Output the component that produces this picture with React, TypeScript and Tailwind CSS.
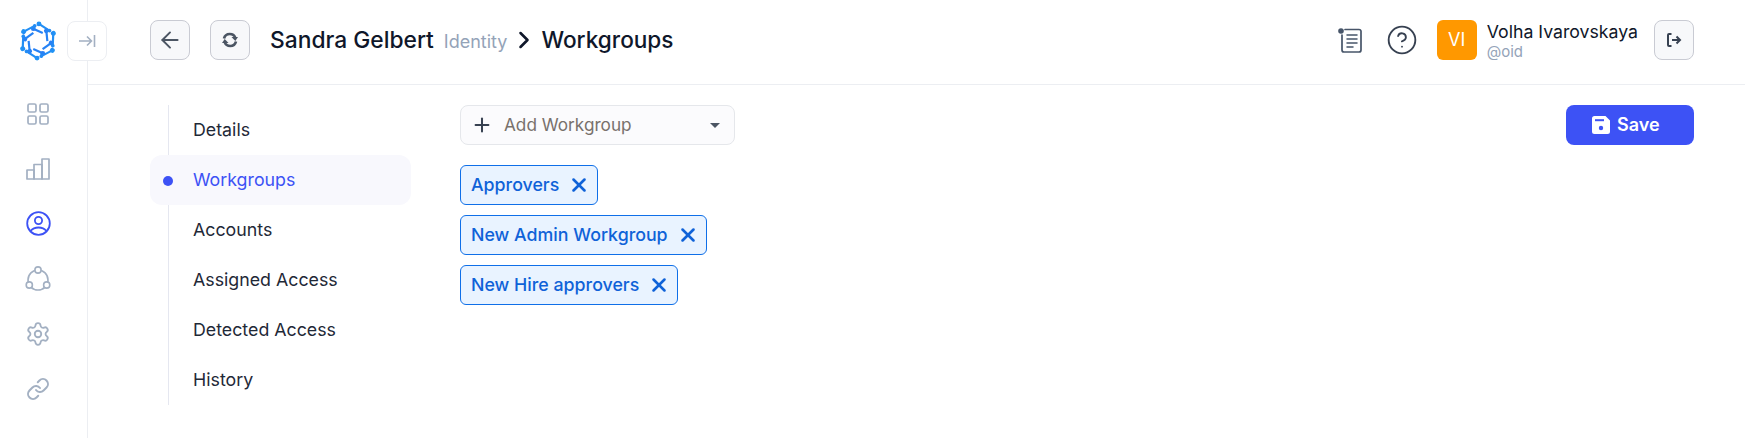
import { ArrowLeft, ChevronRight, CircleHelp, Link as LinkIcon, Plus, Settings, X } from 'lucide-react';

const NAV_ITEMS = ['Details', 'Workgroups', 'Accounts', 'Assigned Access', 'Detected Access', 'History'];
const CHIPS = ['Approvers', 'New Admin Workgroup', 'New Hire approvers'];

function Logo() {
  const arm = (
    <g>
      <path d="M21 2 L32 9" fill="none" stroke="url(#logoFill)" strokeWidth="2.3" />
      <circle cx="21" cy="2" r="2.6" fill="url(#logoFill)" />
      <circle cx="32" cy="9" r="2" fill="url(#logoFill)" />
      <path d="M15 7 L25 11.5" fill="none" stroke="url(#logoFill)" strokeWidth="2.3" />
      <circle cx="15" cy="7" r="2.5" fill="url(#logoFill)" />
    </g>
  );
  return (
    <svg width="38" height="40" viewBox="0 0 40 42" aria-hidden>
      <defs>
        <linearGradient id="logoFill" gradientUnits="userSpaceOnUse" x1="30" y1="0" x2="12" y2="42">
          <stop offset="0" stopColor="#1e9bf5" />
          <stop offset="1" stopColor="#3b3ff2" />
        </linearGradient>
      </defs>
      <g transform="translate(0 1)">
        {arm}
        <g transform="rotate(60 20 20)">{arm}</g>
        <g transform="rotate(120 20 20)">{arm}</g>
        <g transform="rotate(180 20 20)">{arm}</g>
        <g transform="rotate(240 20 20)">{arm}</g>
        <g transform="rotate(300 20 20)">{arm}</g>
      </g>
    </svg>
  );
}

function GridIcon() {
  return (
    <svg width="22" height="22" viewBox="0 0 22 22" fill="none" stroke="currentColor" strokeWidth="1.7" aria-hidden>
      <rect x="1" y="1" width="8" height="8" rx="1.5" />
      <rect x="13" y="1" width="8" height="8" rx="1.5" />
      <rect x="1" y="13" width="8" height="8" rx="1.5" />
      <rect x="13" y="13" width="8" height="8" rx="1.5" />
    </svg>
  );
}

function BarsIcon() {
  return (
    <svg width="24" height="22" viewBox="0 0 24 22" fill="none" stroke="currentColor" strokeWidth="1.7" strokeLinejoin="round" aria-hidden>
      <path d="M1 21 V12 H8 V21 Z" />
      <path d="M8 21 V6.5 H16 V21 Z" />
      <path d="M16 21 V1 H23 V21 Z" />
    </svg>
  );
}

function UserIcon() {
  return (
    <svg width="25" height="25" viewBox="0 0 25 25" fill="none" stroke="currentColor" strokeWidth="1.8" aria-hidden>
      <circle cx="12.5" cy="12.5" r="11.3" />
      <circle cx="12.5" cy="9.5" r="3.6" />
      <path d="M4.5 20 C7 17 9.5 16.5 12.5 16.5 C15.5 16.5 18 17 20.5 20" />
    </svg>
  );
}

function NodesIcon() {
  return (
    <svg width="26" height="26" viewBox="0 0 26 26" fill="none" stroke="currentColor" strokeWidth="1.6" aria-hidden>
      <circle cx="13" cy="14" r="10" />
      <circle cx="13" cy="4" r="3.1" fill="white" />
      <circle cx="4.3" cy="19" r="3.1" fill="white" />
      <circle cx="21.7" cy="19" r="3.1" fill="white" />
    </svg>
  );
}

function NotesIcon() {
  return (
    <svg width="24" height="25" viewBox="0 0 24 25" fill="none" stroke="#475569" strokeWidth="1.7" strokeLinecap="round" aria-hidden>
      <path d="M4 7 V22 A2 2 0 0 0 6 24 H21 A2 2 0 0 0 23 22 V3 A2 2 0 0 0 21 1.5 H7" />
      <path d="M9 7 H19 M9 11 H19 M9 15 H19 M9 19 H15" strokeWidth="1.5" />
      <circle cx="3" cy="3" r="2.8" fill="#475569" stroke="none" />
    </svg>
  );
}

function SyncIcon() {
  return (
    <svg width="16" height="16" viewBox="0 0 16 16" aria-hidden>
      <path d="M2 6.5 C2.8 3.4 5.4 2 7.8 2 C10.4 2 12.4 3.4 13.2 5.6" fill="none" stroke="currentColor" strokeWidth="2.7" />
      <path d="M9.5 5 H16 L13.3 9 Z" fill="currentColor" />
      <path d="M14 9.5 C13.2 12.6 10.6 14 8.2 14 C5.6 14 3.6 12.6 2.8 10.4" fill="none" stroke="currentColor" strokeWidth="2.7" />
      <path d="M6.5 11 H0 L2.7 7 Z" fill="currentColor" />
    </svg>
  );
}

function ExitIcon() {
  return (
    <svg width="16" height="16" viewBox="0 0 16 16" fill="none" stroke="#374151" strokeWidth="2" aria-hidden>
      <path d="M5.5 2 H3 A1 1 0 0 0 2 3 V13 A1 1 0 0 0 3 14 H5.5" />
      <path d="M6 8 H14 M10.5 4.5 L14 8 L10.5 11.5" />
    </svg>
  );
}

function FloppyIcon() {
  return (
    <svg width="18" height="18" viewBox="0 0 18 18" aria-hidden>
      <path d="M2.5 0 H13.5 L18 4.5 V15.5 A2.5 2.5 0 0 1 15.5 18 H2.5 A2.5 2.5 0 0 1 0 15.5 V2.5 A2.5 2.5 0 0 1 2.5 0 Z" fill="white" />
      <rect x="3" y="3.2" width="9" height="2" fill="#3d52f5" />
      <circle cx="9" cy="12" r="2.2" fill="#3d52f5" />
    </svg>
  );
}

function ToolButton({ children, className = '' }: { children: React.ReactNode; className?: string }) {
  return (
    <button className={`flex h-10 w-10 shrink-0 items-center justify-center rounded-lg border border-[#c9cbd3] bg-[#f7f8fa] text-[#4b5563] ${className}`}>
      {children}
    </button>
  );
}

function Sidebar() {
  return (
    <aside className="relative h-full w-[88px] shrink-0 border-r border-[#eceef2]">
      <div className="absolute left-[19px] top-[21px]">
        <Logo />
      </div>
      <button className="absolute left-[67px] top-[21px] z-10 flex h-10 w-10 items-center justify-center rounded-lg border border-[#eceef2] bg-white text-[#a3b0c2]">
        <svg width="18" height="14" viewBox="0 0 18 14" fill="none" stroke="currentColor" strokeWidth="1.6" aria-hidden>
          <path d="M1 7 H13 M9 2.5 L13.5 7 L9 11.5 M16.5 1 V13" />
        </svg>
      </button>
      <nav className="ml-[1px] mt-[86px] flex w-[74px] flex-col items-center text-[#a3b0c2]">
        <div className="flex h-[55px] items-center"><GridIcon /></div>
        <div className="flex h-[55px] items-center"><BarsIcon /></div>
        <div className="flex h-[55px] items-center text-[#3d52f5]"><UserIcon /></div>
        <div className="flex h-[55px] items-center"><NodesIcon /></div>
        <div className="flex h-[55px] items-center"><Settings size={26} strokeWidth={1.7} /></div>
        <div className="flex h-[55px] items-center"><LinkIcon size={24} strokeWidth={2} /></div>
      </nav>
    </aside>
  );
}

function Header() {
  return (
    <header className="flex h-[85px] items-center border-b border-[#eceef2] pb-[4px] pl-[62px] pr-[51px]">
      <ToolButton><ArrowLeft size={26} strokeWidth={1.8} /></ToolButton>
      <ToolButton className="ml-5"><SyncIcon /></ToolButton>
      <div className="ml-5 flex items-baseline text-[#0f172a]">
        <span className="text-[22.8px] font-medium">Sandra Gelbert</span>
        <span className="ml-[10px] text-lg text-[#94a3b8]">Identity</span>
        <ChevronRight size={28} strokeWidth={2.2} className="ml-[3px] mr-[3px] self-center" />
        <span className="text-[22.6px] font-medium">Workgroups</span>
      </div>
      <div className="ml-auto flex items-center">
        <NotesIcon />
        <CircleHelp size={32} strokeWidth={1.4} className="ml-[24px] text-[#374151]" />
        <div className="ml-[19px] flex h-10 w-10 items-center justify-center rounded-md bg-[#ff9800] text-lg text-white">VI</div>
        <div className="ml-[10px] mt-[4px] flex flex-col">
          <span className="text-[17.7px] leading-5 text-[#0f172a]">Volha Ivarovskaya</span>
          <span className="text-[15px] leading-5 text-[#94a3b8]">@oid</span>
        </div>
        <ToolButton className="ml-4"><ExitIcon /></ToolButton>
      </div>
    </header>
  );
}

function SubNav() {
  return (
    <div className="relative w-[261px] shrink-0">
      <div className="absolute bottom-0 left-[18px] top-0 w-px bg-[#e5e7f0]" />
      {NAV_ITEMS.map((item) => {
        const active = item === 'Workgroups';
        return (
          <div
            key={item}
            className={`relative flex h-[50px] items-center rounded-xl pl-[43px] pt-[1px] text-[17.8px] ${active ? 'bg-[#f8f8fd] text-[#3d52f5]' : 'text-[#1f2937]'}`}
          >
            {active && <span className="absolute left-[13px] h-[10px] w-[10px] rounded-full bg-[#3d52f5]" />}
            {item}
          </div>
        );
      })}
    </div>
  );
}

export default function App() {
  return (
    <div className="flex h-[438px] w-[1745px] overflow-hidden bg-white font-['Inter',sans-serif]">
      <Sidebar />
      <main className="min-w-0 flex-1">
        <Header />
        <div className="flex pl-[62px] pr-[51px] pt-5">
          <SubNav />
          <div className="ml-[49px] flex flex-col items-start">
            <div className="flex h-10 w-[275px] items-center rounded-lg border border-[#e5e7eb] bg-[#fbfbfd] pl-[10px] pr-[14px] text-[#78716c]">
              <Plus size={22} strokeWidth={2.2} className="text-[#374151]" />
              <span className="ml-[11px] text-[17.2px]">Add Workgroup</span>
              <span className="ml-auto h-0 w-0 border-x-[5px] border-t-[5px] border-x-transparent border-t-[#4b5563]" />
            </div>
            <div className="mt-5 flex flex-col items-start gap-[10px]">
              {CHIPS.map((chip) => (
                <div key={chip} className="flex h-10 items-center rounded-md border border-[#0f6fe8] bg-[#e9f3ff] pl-[10px] pr-[7px] text-[17.8px] font-medium text-[#0f62d8]">
                  {chip}
                  <X size={22} strokeWidth={2.8} className="ml-[9px]" />
                </div>
              ))}
            </div>
          </div>
          <button className="ml-auto flex h-10 w-[128px] items-center gap-[7px] rounded-lg bg-[#3d52f5] pl-[26px] text-lg font-semibold text-white">
            <FloppyIcon />
            Save
          </button>
        </div>
      </main>
    </div>
  );
}
